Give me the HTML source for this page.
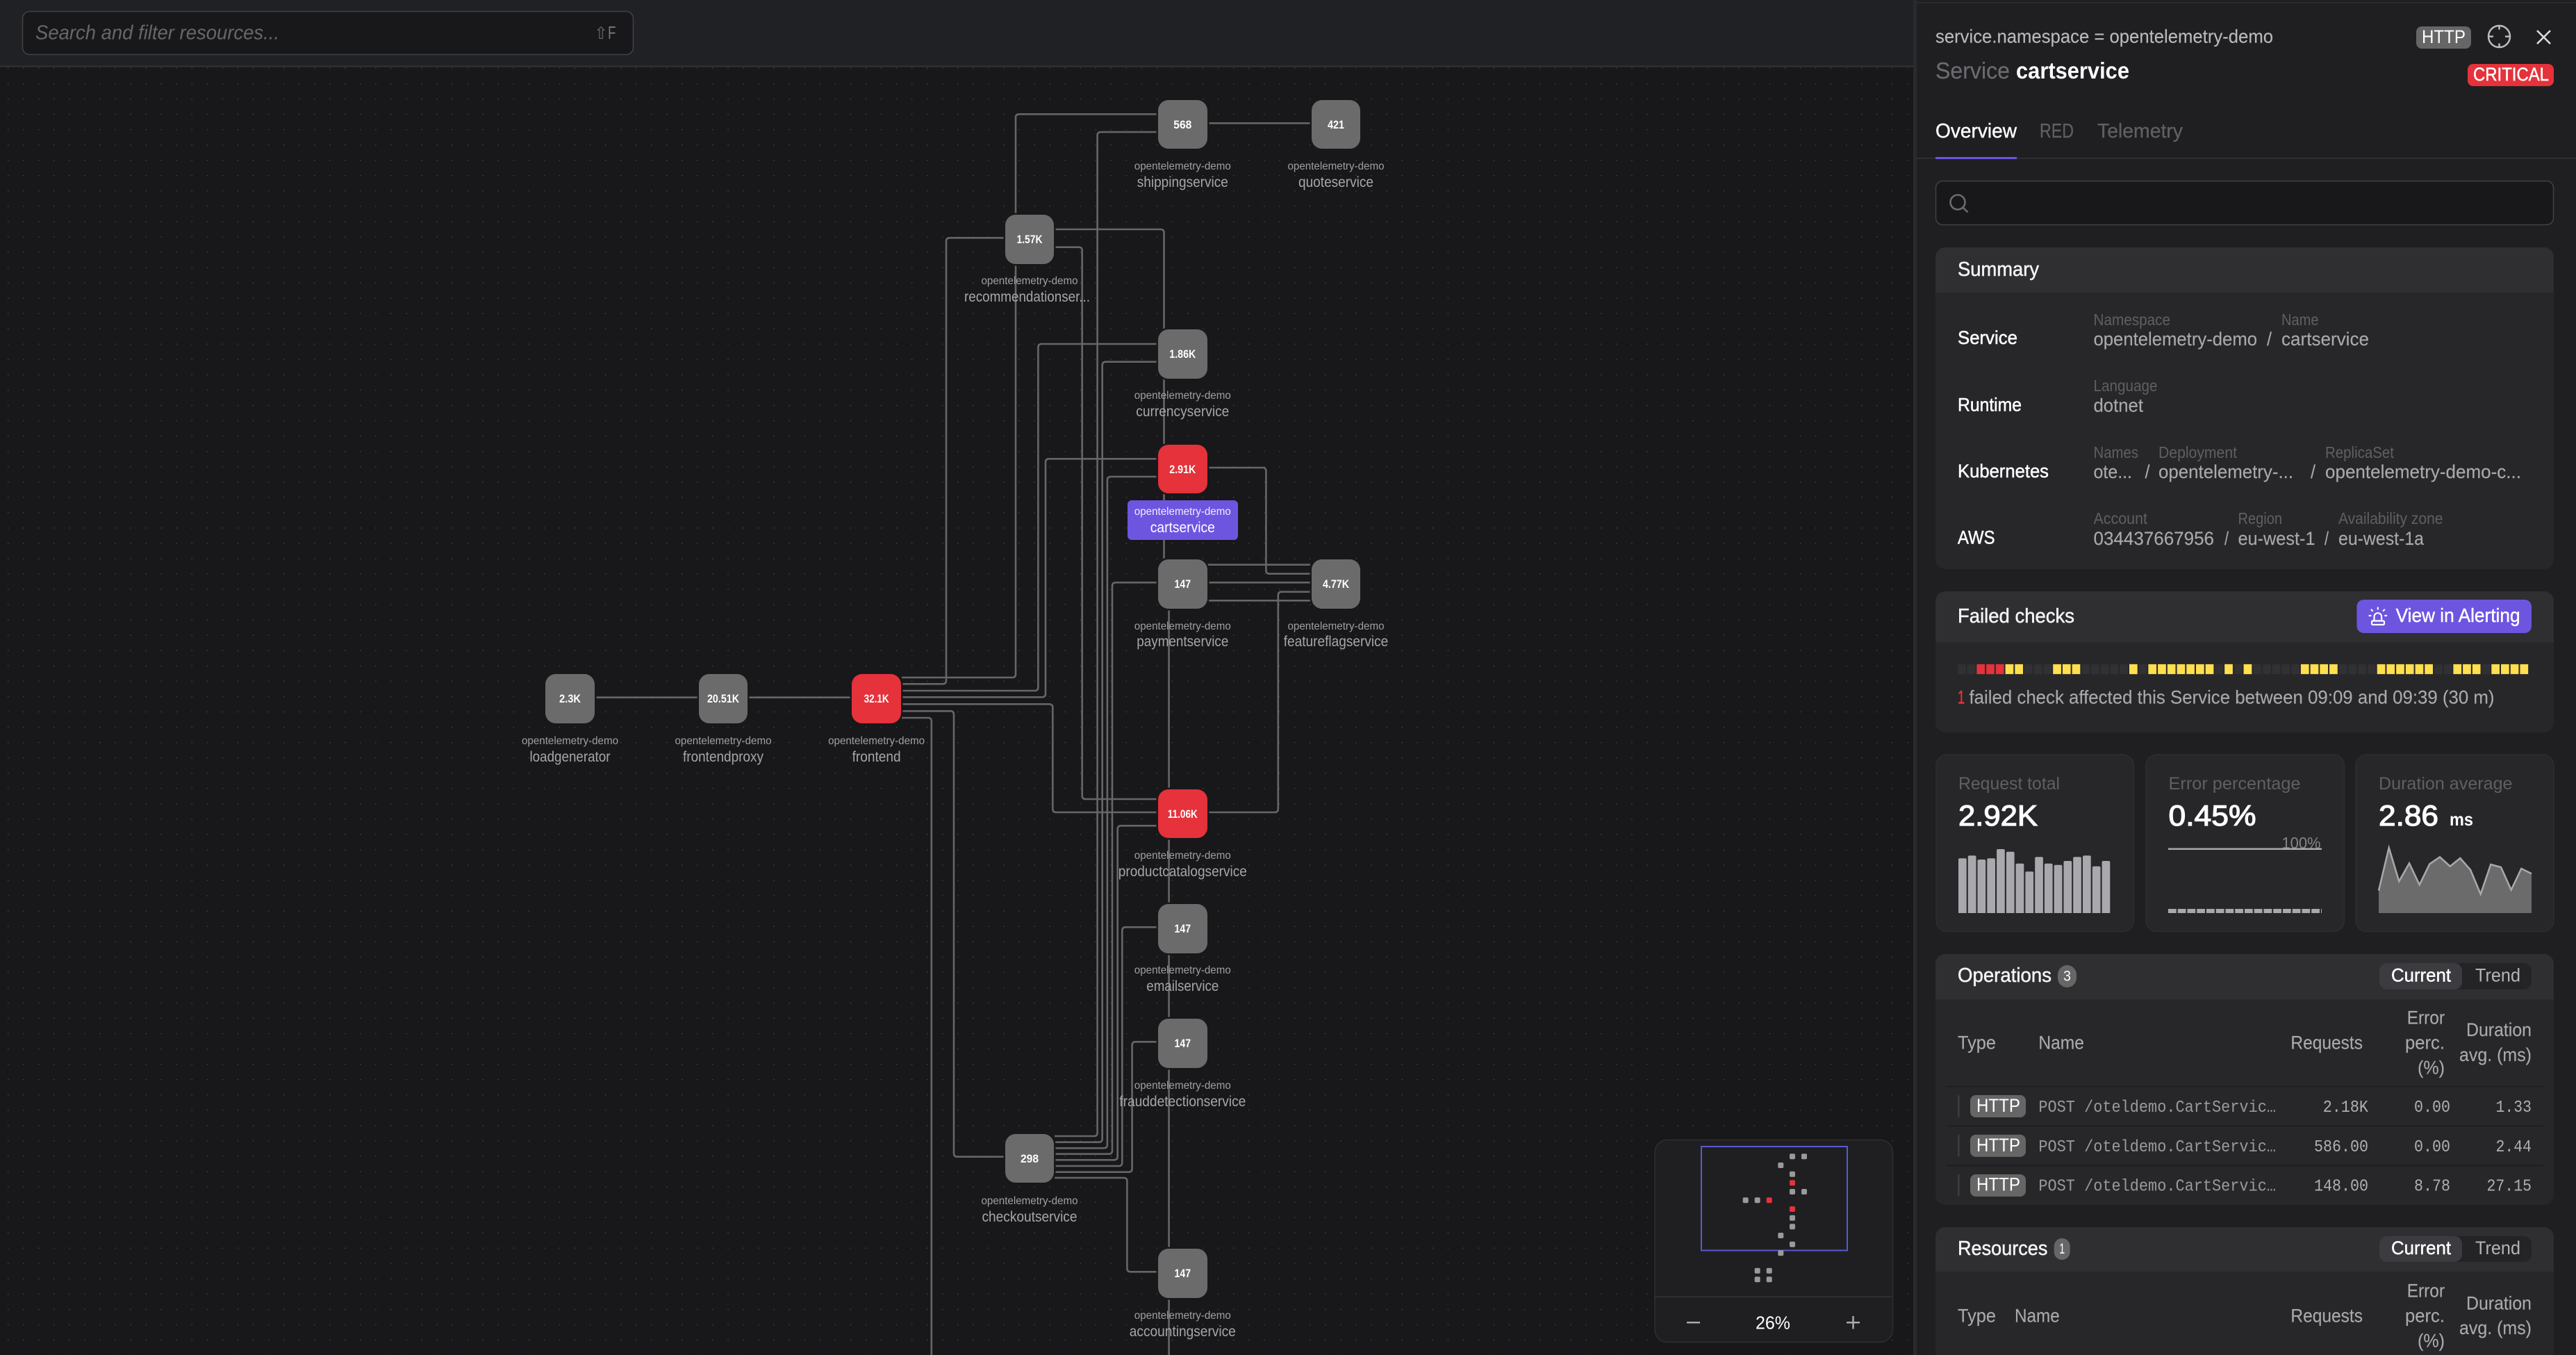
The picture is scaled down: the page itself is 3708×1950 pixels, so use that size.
<!DOCTYPE html>
<html><head><meta charset="utf-8"><title>Service map</title>
<style>
html,body{margin:0;padding:0;background:#18181b;width:3708px;height:1950px;overflow:hidden}
svg{display:block;position:absolute;left:0;top:0}
text{font-family:"Liberation Sans",sans-serif;white-space:pre}
.mono{font-family:"Liberation Mono",monospace;font-size:24px;fill:#9a9a9e}
.num{font-family:"Liberation Mono",monospace;font-size:24px;fill:#b0b0b4}
.n{fill:#fff;font-size:17px;font-weight:700}
.ns{fill:#a0a0a3;font-size:16px}
.nm{fill:#a6a6a9;font-size:21px}
.key{fill:#fff;font-size:27px;stroke:#fff;stroke-width:.5}
.lb{fill:#5f5f64;font-size:23px}
.val{fill:#a9a9ad;font-size:27px;stroke:#a9a9ad;stroke-width:.15}
.th{fill:#a9a9ad;font-size:27px;stroke:#a9a9ad;stroke-width:.15}
.hd{fill:#f4f4f5;font-size:29px;stroke:#f4f4f5;stroke-width:.5}
.big{fill:#fff;font-size:42px;font-weight:400;stroke:#fff;stroke-width:1.2}
.mlb{fill:#5f5f64;font-size:25px}
.e path,.e line{fill:none;stroke:#666;stroke-width:2.6}
.node{stroke:#18181b;stroke-width:5;paint-order:stroke}
</style></head><body>
<svg width="3708" height="1950" viewBox="0 0 3708 1950" xmlns="http://www.w3.org/2000/svg">
<defs>
<pattern id="dots" x="0" y="0" width="22.05" height="22.05" patternUnits="userSpaceOnUse" patternTransform="translate(11 97.7)"><circle cx="0.5" cy="0.5" r="1" fill="#47474b"/></pattern>
</defs>
<rect width="3708" height="1950" fill="#18181b"/>
<rect x="0" y="96" width="2760" height="1854" fill="url(#dots)"/>
<!-- top bar -->
<rect x="0" y="0" width="2754" height="95" fill="#202124"/>
<rect x="0" y="94.5" width="2754" height="2" fill="#333336"/>
<rect x="32.5" y="16.5" width="879" height="62" rx="10" fill="#18181b" stroke="#414145" stroke-width="1.6"/>
<text x="51" y="56.7" font-size="29" font-style="italic" fill="#67676b" textLength="351" lengthAdjust="spacingAndGlyphs">Search and filter resources...</text>
<text x="855" y="56" font-size="24" fill="#67676b" font-family="DejaVu Sans">⇧</text>
<text x="875" y="56" font-size="26" fill="#77777b" textLength="11.5" lengthAdjust="spacingAndGlyphs">F</text>

<!-- edges -->
<g class="e">
<line x1="858" y1="1003.7" x2="1004" y2="1003.7"/>
<line x1="1078" y1="1003.7" x2="1225" y2="1003.7"/>
<line x1="1739" y1="177.3" x2="1886" y2="177.3"/>
<path d="M1298 975H1457Q1462 975 1462 970V169Q1462 164.3 1467 164.3H1665"/>
<path d="M1518 1635H1575Q1579.6 1635 1579.6 1630V195Q1579.6 190 1584.6 190H1665"/>
<path d="M1298 984.3H1357Q1362 984.3 1362 979.3V347.3Q1362 342.3 1367 342.3H1445"/>
<path d="M1518 330H1670.5Q1675.5 330 1675.5 335V807.7Q1675.5 812.7 1680.5 812.7H1886"/>
<path d="M1886 864.3H1687.6Q1682.6 864.3 1682.6 869.3V1950"/>
<line x1="1739" y1="838.3" x2="1886" y2="838.3"/>
<path d="M1518 355.7H1552.7Q1557.7 355.7 1557.7 360.7V1145Q1557.7 1150 1562.7 1150H1665"/>
<path d="M1298 994H1489.4Q1494.4 994 1494.4 989V500Q1494.4 495 1499.4 495H1665"/>
<path d="M1518 1643.7H1581.7Q1586.7 1643.7 1586.7 1638.7V525.7Q1586.7 520.7 1591.7 520.7H1665"/>
<path d="M1298 1003.3H1500Q1505 1003.3 1505 998.3V665.3Q1505 660.3 1510 660.3H1665"/>
<path d="M1518 1652.3H1588.9Q1593.9 1652.3 1593.9 1647.3V691Q1593.9 686 1598.9 686H1665"/>
<path d="M1739 673H1817.4Q1822.4 673 1822.4 678V820.7Q1822.4 825.7 1827.4 825.7H1886"/>
<path d="M1518 1660.7H1596Q1601 1660.7 1601 1655.7V843.3Q1601 838.3 1606 838.3H1665"/>
<path d="M1886 851.7H1844.8Q1839.8 851.7 1839.8 856.7V1164Q1839.8 1169 1834.8 1169H1739"/>
<path d="M1298 1013.3H1510.3Q1515.3 1013.3 1515.3 1018.3V1164Q1515.3 1169 1520.3 1169H1665"/>
<path d="M1298 1023.3H1368Q1373 1023.3 1373 1028.3V1659.7Q1373 1664.7 1378 1664.7H1445"/>
<path d="M1298 1033H1335.8Q1340.8 1033 1340.8 1038V1950"/>
<path d="M1518 1669.3H1603.7Q1608.7 1669.3 1608.7 1664.3V1193.3Q1608.7 1188.3 1613.7 1188.3H1665"/>
<path d="M1518 1678H1610.3Q1615.3 1678 1615.3 1673V1339.3Q1615.3 1334.3 1620.3 1334.3H1665"/>
<path d="M1518 1686.7H1624.6Q1629.6 1686.7 1629.6 1681.7V1504.3Q1629.6 1499.3 1634.6 1499.3H1665"/>
<path d="M1518 1695H1617.4Q1622.4 1695 1622.4 1700V1825.3Q1622.4 1830.3 1627.4 1830.3H1665"/>
</g>

<!-- nodes -->
<g>
<rect class="node" x="1667" y="144" width="71" height="70" rx="15" fill="#6b6b6b"/>
<text class="n" x="1702.3" y="185" text-anchor="middle" textLength="26" lengthAdjust="spacingAndGlyphs">568</text>
<text class="ns" x="1702.3" y="244" text-anchor="middle" textLength="139" lengthAdjust="spacingAndGlyphs">opentelemetry-demo</text>
<text class="nm" x="1702.3" y="269" text-anchor="middle" textLength="131" lengthAdjust="spacingAndGlyphs">shippingservice</text>

<rect class="node" x="1888" y="144" width="70" height="70" rx="15" fill="#6b6b6b"/>
<text class="n" x="1923" y="185" text-anchor="middle" textLength="24" lengthAdjust="spacingAndGlyphs">421</text>
<text class="ns" x="1923" y="244" text-anchor="middle" textLength="139" lengthAdjust="spacingAndGlyphs">opentelemetry-demo</text>
<text class="nm" x="1923" y="269" text-anchor="middle" textLength="108" lengthAdjust="spacingAndGlyphs">quoteservice</text>

<rect class="node" x="1447" y="309" width="70" height="71" rx="15" fill="#6b6b6b"/>
<text class="n" x="1482" y="350" text-anchor="middle" textLength="37" lengthAdjust="spacingAndGlyphs">1.57K</text>
<text class="ns" x="1482" y="409" text-anchor="middle" textLength="139" lengthAdjust="spacingAndGlyphs">opentelemetry-demo</text>
<text class="nm" x="1388" y="434" textLength="181" lengthAdjust="spacingAndGlyphs">recommendationser...</text>

<rect class="node" x="1667" y="474" width="71" height="71" rx="15" fill="#6b6b6b"/>
<text class="n" x="1702.3" y="515" text-anchor="middle" textLength="38" lengthAdjust="spacingAndGlyphs">1.86K</text>
<text class="ns" x="1702.3" y="574" text-anchor="middle" textLength="139" lengthAdjust="spacingAndGlyphs">opentelemetry-demo</text>
<text class="nm" x="1702.3" y="599" text-anchor="middle" textLength="134" lengthAdjust="spacingAndGlyphs">currencyservice</text>

<rect class="node" x="1667" y="640" width="71" height="70" rx="15" fill="#e5323b"/>
<text class="n" x="1702.3" y="681" text-anchor="middle" textLength="38" lengthAdjust="spacingAndGlyphs">2.91K</text>
<rect x="1623" y="720" width="159" height="57" rx="6" fill="#6e55e0"/>
<text class="ns" style="fill:#f0eefc" x="1702.3" y="741" text-anchor="middle" textLength="139" lengthAdjust="spacingAndGlyphs">opentelemetry-demo</text>
<text class="nm" style="fill:#fff" x="1702.3" y="766" text-anchor="middle" textLength="93" lengthAdjust="spacingAndGlyphs">cartservice</text>

<rect class="node" x="1667" y="805" width="71" height="71" rx="15" fill="#6b6b6b"/>
<text class="n" x="1702.3" y="846" text-anchor="middle" textLength="23.5" lengthAdjust="spacingAndGlyphs">147</text>
<text class="ns" x="1702.3" y="906" text-anchor="middle" textLength="139" lengthAdjust="spacingAndGlyphs">opentelemetry-demo</text>
<text class="nm" x="1702.3" y="930" text-anchor="middle" textLength="132" lengthAdjust="spacingAndGlyphs">paymentservice</text>

<rect class="node" x="1888" y="805" width="70" height="71" rx="15" fill="#6b6b6b"/>
<text class="n" x="1923" y="846" text-anchor="middle" textLength="38" lengthAdjust="spacingAndGlyphs">4.77K</text>
<text class="ns" x="1923" y="906" text-anchor="middle" textLength="139" lengthAdjust="spacingAndGlyphs">opentelemetry-demo</text>
<text class="nm" x="1923" y="930" text-anchor="middle" textLength="150.5" lengthAdjust="spacingAndGlyphs">featureflagservice</text>

<rect class="node" x="785" y="970" width="71" height="71" rx="15" fill="#6b6b6b"/>
<text class="n" x="820.5" y="1011" text-anchor="middle" textLength="31" lengthAdjust="spacingAndGlyphs">2.3K</text>
<text class="ns" x="820.5" y="1071" text-anchor="middle" textLength="139" lengthAdjust="spacingAndGlyphs">opentelemetry-demo</text>
<text class="nm" x="820.5" y="1096" text-anchor="middle" textLength="116" lengthAdjust="spacingAndGlyphs">loadgenerator</text>

<rect class="node" x="1006" y="970" width="70" height="71" rx="15" fill="#6b6b6b"/>
<text class="n" x="1041" y="1011" text-anchor="middle" textLength="46" lengthAdjust="spacingAndGlyphs">20.51K</text>
<text class="ns" x="1041" y="1071" text-anchor="middle" textLength="139" lengthAdjust="spacingAndGlyphs">opentelemetry-demo</text>
<text class="nm" x="1041" y="1096" text-anchor="middle" textLength="116" lengthAdjust="spacingAndGlyphs">frontendproxy</text>

<rect class="node" x="1226" y="970" width="71" height="71" rx="15" fill="#e5323b"/>
<text class="n" x="1261.6" y="1011" text-anchor="middle" textLength="36" lengthAdjust="spacingAndGlyphs">32.1K</text>
<text class="ns" x="1261.6" y="1071" text-anchor="middle" textLength="139" lengthAdjust="spacingAndGlyphs">opentelemetry-demo</text>
<text class="nm" x="1261.6" y="1096" text-anchor="middle" textLength="70" lengthAdjust="spacingAndGlyphs">frontend</text>

<rect class="node" x="1667" y="1136" width="71" height="70" rx="15" fill="#e5323b"/>
<text class="n" x="1702.3" y="1177" text-anchor="middle" textLength="43" lengthAdjust="spacingAndGlyphs">11.06K</text>
<text class="ns" x="1702.3" y="1236" text-anchor="middle" textLength="139" lengthAdjust="spacingAndGlyphs">opentelemetry-demo</text>
<text class="nm" x="1702.3" y="1261" text-anchor="middle" textLength="185" lengthAdjust="spacingAndGlyphs">productcatalogservice</text>

<rect class="node" x="1667" y="1301" width="71" height="71" rx="15" fill="#6b6b6b"/>
<text class="n" x="1702.3" y="1342" text-anchor="middle" textLength="23.5" lengthAdjust="spacingAndGlyphs">147</text>
<text class="ns" x="1702.3" y="1401" text-anchor="middle" textLength="139" lengthAdjust="spacingAndGlyphs">opentelemetry-demo</text>
<text class="nm" x="1702.3" y="1426" text-anchor="middle" textLength="104" lengthAdjust="spacingAndGlyphs">emailservice</text>

<rect class="node" x="1667" y="1466" width="71" height="71" rx="15" fill="#6b6b6b"/>
<text class="n" x="1702.3" y="1507" text-anchor="middle" textLength="23.5" lengthAdjust="spacingAndGlyphs">147</text>
<text class="ns" x="1702.3" y="1567" text-anchor="middle" textLength="139" lengthAdjust="spacingAndGlyphs">opentelemetry-demo</text>
<text class="nm" x="1702.3" y="1592" text-anchor="middle" textLength="182" lengthAdjust="spacingAndGlyphs">frauddetectionservice</text>

<rect class="node" x="1447" y="1632" width="70" height="70" rx="15" fill="#6b6b6b"/>
<text class="n" x="1482" y="1673" text-anchor="middle" textLength="26" lengthAdjust="spacingAndGlyphs">298</text>
<text class="ns" x="1482" y="1733" text-anchor="middle" textLength="139" lengthAdjust="spacingAndGlyphs">opentelemetry-demo</text>
<text class="nm" x="1482" y="1758" text-anchor="middle" textLength="137" lengthAdjust="spacingAndGlyphs">checkoutservice</text>

<rect class="node" x="1667" y="1797" width="71" height="71" rx="15" fill="#6b6b6b"/>
<text class="n" x="1702.3" y="1838" text-anchor="middle" textLength="23.5" lengthAdjust="spacingAndGlyphs">147</text>
<text class="ns" x="1702.3" y="1898" text-anchor="middle" textLength="139" lengthAdjust="spacingAndGlyphs">opentelemetry-demo</text>
<text class="nm" x="1702.3" y="1923" text-anchor="middle" textLength="153" lengthAdjust="spacingAndGlyphs">accountingservice</text>
</g>

<!-- minimap -->
<rect x="2382" y="1640.5" width="342.5" height="291" rx="18" fill="#1f1f22" stroke="#2f2f32" stroke-width="1.5"/>
<rect x="2449" y="1650" width="210" height="149.5" fill="none" stroke="#5a5ad0" stroke-width="2"/>
<g fill="#9a9a9a">
<rect x="2576" y="1660.3" width="8" height="8" rx="2"/><rect x="2593" y="1660.3" width="8" height="8" rx="2"/>
<rect x="2559.3" y="1673" width="8" height="8" rx="2"/>
<rect x="2576" y="1685.7" width="8" height="8" rx="2"/>
<rect x="2576" y="1711" width="8" height="8" rx="2"/><rect x="2593" y="1711" width="8" height="8" rx="2"/>
<rect x="2508.7" y="1723.3" width="8" height="8" rx="2"/><rect x="2525.7" y="1723.3" width="8" height="8" rx="2"/>
<rect x="2576" y="1748.7" width="8" height="8" rx="2"/>
<rect x="2576" y="1761.3" width="8" height="8" rx="2"/>
<rect x="2559.3" y="1774" width="8" height="8" rx="2"/>
<rect x="2576" y="1786.7" width="8" height="8" rx="2"/>
<rect x="2559.3" y="1799.3" width="8" height="8" rx="2"/>
<rect x="2525.7" y="1824.7" width="8" height="8" rx="2"/><rect x="2542.7" y="1824.7" width="8" height="8" rx="2"/>
<rect x="2525.7" y="1837.3" width="8" height="8" rx="2"/><rect x="2542.7" y="1837.3" width="8" height="8" rx="2"/>
</g>
<g fill="#e5323b">
<rect x="2576" y="1698.3" width="8" height="8" rx="2"/>
<rect x="2542.7" y="1723.3" width="8" height="8" rx="2"/>
<rect x="2576" y="1736" width="8" height="8" rx="2"/>
</g>
<rect x="2382" y="1865.5" width="341" height="1.5" fill="#333336"/>
<path d="M2428 1903.3H2447M2658 1903.3H2677M2667.5 1894V1912.5" stroke="#aaa" stroke-width="2.5" fill="none"/>
<text x="2527" y="1912.7" font-size="26" fill="#fff" textLength="50" lengthAdjust="spacingAndGlyphs">26%</text>

<!-- panel -->
<rect x="2754" y="0" width="954" height="1950" fill="#1f1f22"/>
<rect x="2754" y="0" width="5" height="1950" fill="#2a2a2d"/>
<rect x="2754" y="3" width="954" height="1.5" fill="#2c2c2f"/>

<text x="2786" y="61.5" font-size="27" fill="#b9b9bd" stroke="#b9b9bd" stroke-width=".15" textLength="486" lengthAdjust="spacingAndGlyphs">service.namespace = opentelemetry-demo</text>
<rect x="3478" y="38" width="79" height="32" rx="8" fill="#666"/>
<text x="3486" y="62" font-size="27" fill="#fff" textLength="63" lengthAdjust="spacingAndGlyphs">HTTP</text>
<g fill="none" stroke="#bcbcbc" stroke-width="2.5">
<circle cx="3597.5" cy="52.5" r="15.5"/>
<path d="M3597.5 36V42.5M3597.5 62.5V69M3581 52.5H3589M3606 52.5H3614"/>
</g>
<path d="M3652 44L3671 63M3671 44L3652 63" stroke="#dcdcdc" stroke-width="2.6" fill="none"/>

<text x="2786" y="113" font-size="33" fill="#6b6b70" stroke="#6b6b70" stroke-width=".2" textLength="107" lengthAdjust="spacingAndGlyphs">Service</text>
<text x="2902" y="113" font-size="33" font-weight="700" fill="#fff" textLength="163" lengthAdjust="spacingAndGlyphs">cartservice</text>
<rect x="3552" y="92" width="124" height="32" rx="8" fill="#e5323b"/>
<text x="3560" y="116" font-size="27" fill="#fff" stroke="#fff" stroke-width=".5" textLength="109" lengthAdjust="spacingAndGlyphs">CRITICAL</text>

<text x="2786" y="198" font-size="29" fill="#fff" stroke="#fff" stroke-width=".4" textLength="117" lengthAdjust="spacingAndGlyphs">Overview</text>
<text x="2936" y="198" font-size="29" fill="#5f5f64" stroke="#5f5f64" stroke-width=".3" textLength="49" lengthAdjust="spacingAndGlyphs">RED</text>
<text x="3019" y="198" font-size="29" fill="#5f5f64" stroke="#5f5f64" stroke-width=".3" textLength="123" lengthAdjust="spacingAndGlyphs">Telemetry</text>
<rect x="2759" y="227" width="949" height="1.5" fill="#333336"/>
<rect x="2786" y="226" width="117" height="3" fill="#6e55e0"/>

<rect x="2786.5" y="260.5" width="889" height="63" rx="10" fill="#18181b" stroke="#414145" stroke-width="1.5"/>
<circle cx="2818" cy="291" r="10.5" fill="none" stroke="#6b6b70" stroke-width="2.6"/>
<path d="M2826 299L2832.5 305.5" stroke="#6b6b70" stroke-width="2.6"/>

<!-- Summary -->
<rect x="2786" y="356" width="890" height="463" rx="14" fill="#27272a"/>
<path d="M2786 421V370a14 14 0 0 1 14-14H3662a14 14 0 0 1 14 14V421Z" fill="#2f2f32"/>
<text class="hd" x="2818" y="397" textLength="117" lengthAdjust="spacingAndGlyphs">Summary</text>
<text class="key" x="2818" y="495" textLength="86" lengthAdjust="spacingAndGlyphs">Service</text>
<text class="lb" x="3013.5" y="468" textLength="110.5" lengthAdjust="spacingAndGlyphs">Namespace</text>
<text class="lb" x="3284" y="468" textLength="53.5" lengthAdjust="spacingAndGlyphs">Name</text>
<text class="val" x="3013.5" y="497" textLength="235.5" lengthAdjust="spacingAndGlyphs">opentelemetry-demo</text>
<text class="val" x="3263" y="497" textLength="7" lengthAdjust="spacingAndGlyphs">/</text>
<text class="val" x="3284" y="497" textLength="126" lengthAdjust="spacingAndGlyphs">cartservice</text>

<text class="key" x="2818" y="591.5" textLength="92" lengthAdjust="spacingAndGlyphs">Runtime</text>
<text class="lb" x="3013.5" y="563" textLength="92" lengthAdjust="spacingAndGlyphs">Language</text>
<text class="val" x="3013.5" y="592.7" textLength="71.5" lengthAdjust="spacingAndGlyphs">dotnet</text>

<text class="key" x="2818" y="687" textLength="131" lengthAdjust="spacingAndGlyphs">Kubernetes</text>
<text class="lb" x="3013.5" y="659" textLength="64.5" lengthAdjust="spacingAndGlyphs">Names</text>
<text class="lb" x="3107" y="659" textLength="113" lengthAdjust="spacingAndGlyphs">Deployment</text>
<text class="lb" x="3347" y="659" textLength="99" lengthAdjust="spacingAndGlyphs">ReplicaSet</text>
<text class="val" x="3013.5" y="688" textLength="55.5" lengthAdjust="spacingAndGlyphs">ote...</text>
<text class="val" x="3087.5" y="688" textLength="7" lengthAdjust="spacingAndGlyphs">/</text>
<text class="val" x="3107" y="688" textLength="194" lengthAdjust="spacingAndGlyphs">opentelemetry-...</text>
<text class="val" x="3326" y="688" textLength="7" lengthAdjust="spacingAndGlyphs">/</text>
<text class="val" x="3347" y="688" textLength="282" lengthAdjust="spacingAndGlyphs">opentelemetry-demo-c...</text>

<text class="key" x="2818" y="782.5" textLength="53.5" lengthAdjust="spacingAndGlyphs">AWS</text>
<text class="lb" x="3013.5" y="754" textLength="77.5" lengthAdjust="spacingAndGlyphs">Account</text>
<text class="lb" x="3221.5" y="754" textLength="63.5" lengthAdjust="spacingAndGlyphs">Region</text>
<text class="lb" x="3366" y="754" textLength="150.5" lengthAdjust="spacingAndGlyphs">Availability zone</text>
<text class="val" x="3013.5" y="784" textLength="173.5" lengthAdjust="spacingAndGlyphs">034437667956</text>
<text class="val" x="3202" y="784" textLength="6" lengthAdjust="spacingAndGlyphs">/</text>
<text class="val" x="3221.5" y="784" textLength="111" lengthAdjust="spacingAndGlyphs">eu-west-1</text>
<text class="val" x="3346" y="784" textLength="6" lengthAdjust="spacingAndGlyphs">/</text>
<text class="val" x="3366" y="784" textLength="123" lengthAdjust="spacingAndGlyphs">eu-west-1a</text>

<!-- Failed checks -->
<rect x="2786" y="851" width="890" height="203" rx="14" fill="#27272a"/>
<path d="M2786 924V865a14 14 0 0 1 14-14H3662a14 14 0 0 1 14 14V924Z" fill="#2f2f32"/>
<text class="hd" x="2818" y="896" textLength="168" lengthAdjust="spacingAndGlyphs">Failed checks</text>
<rect x="3392.5" y="863" width="251.5" height="48" rx="10" fill="#6e55e0"/>
<g fill="none" stroke="#fff" stroke-width="2.2" stroke-linecap="round">
<path d="M3417.5 893V887.5a5.3 5.3 0 0 1 10.6 0V893"/>
<rect x="3414" y="893.5" width="18" height="5.5" rx="1.5"/>
<path d="M3422.8 874.5V876.5M3413.5 877.5L3415 879M3432.2 877.5L3430.6 879M3410.5 886H3412.5M3433.2 886H3435.2"/>
</g>
<text x="3448.6" y="895" font-size="28" fill="#fff" stroke="#fff" stroke-width=".4" textLength="179" lengthAdjust="spacingAndGlyphs">View in Alerting</text>
<g fill="none" stroke-width="14.3" stroke-dasharray="11.7 2.02">
<line x1="2818" y1="963" x2="3641" y2="963" stroke="#313134"/>
<line x1="2845.4" y1="963" x2="2884.6" y2="963" stroke="#e5323b"/>
<line x1="2886.6" y1="963" x2="2912" y2="963" stroke="#ffdf4d"/>
<line x1="2955.2" y1="963" x2="2994.4" y2="963" stroke="#ffdf4d"/>
<line x1="3065" y1="963" x2="3076.7" y2="963" stroke="#ffdf4d"/>
<line x1="3092.4" y1="963" x2="3186.4" y2="963" stroke="#ffdf4d"/>
<line x1="3202.2" y1="963" x2="3213.9" y2="963" stroke="#ffdf4d"/>
<line x1="3229.6" y1="963" x2="3241.3" y2="963" stroke="#ffdf4d"/>
<line x1="3311.9" y1="963" x2="3364.8" y2="963" stroke="#ffdf4d"/>
<line x1="3421.7" y1="963" x2="3502" y2="963" stroke="#ffdf4d"/>
<line x1="3531.4" y1="963" x2="3570.6" y2="963" stroke="#ffdf4d"/>
<line x1="3586.3" y1="963" x2="3641" y2="963" stroke="#ffdf4d"/>
</g>
<text x="2818" y="1012.7" font-size="27" fill="#f03038" stroke="#f03038" stroke-width=".5" textLength="10" lengthAdjust="spacingAndGlyphs">1</text>
<text class="val" x="2834.5" y="1012.7" textLength="756" lengthAdjust="spacingAndGlyphs">failed check affected this Service between 09:09 and 09:39 (30 m)</text>

<!-- metric cards -->
<g fill="#27272a" stroke="#2e2e31" stroke-width="1.5">
<rect x="2787" y="1086" width="284.5" height="254.5" rx="16"/>
<rect x="3089" y="1086" width="285.5" height="254.5" rx="16"/>
<rect x="3391" y="1086" width="285" height="254.5" rx="16"/>
</g>
<text class="mlb" x="2819" y="1136" textLength="146" lengthAdjust="spacingAndGlyphs">Request total</text>
<text class="mlb" x="3121.5" y="1136" textLength="190" lengthAdjust="spacingAndGlyphs">Error percentage</text>
<text class="mlb" x="3424" y="1136" textLength="192.5" lengthAdjust="spacingAndGlyphs">Duration average</text>
<text class="big" x="2819" y="1188" textLength="114" lengthAdjust="spacingAndGlyphs">2.92K</text>
<text class="big" x="3121.5" y="1188" textLength="126" lengthAdjust="spacingAndGlyphs">0.45%</text>
<text class="big" x="3424" y="1188" textLength="86" lengthAdjust="spacingAndGlyphs">2.86</text>
<text x="3526" y="1188" font-size="26" fill="#fff" font-weight="700" textLength="34" lengthAdjust="spacingAndGlyphs">ms</text>
<g fill="#a9a9ad">
<rect x="2819" y="1235.3" width="11.7" height="82" rx="2"/>
<rect x="2832.8" y="1231.3" width="11.7" height="86" rx="2"/>
<rect x="2846.5" y="1237" width="11.7" height="80" rx="2"/>
<rect x="2860.3" y="1235.3" width="11.7" height="82" rx="2"/>
<rect x="2874.1" y="1222" width="11.7" height="95" rx="2"/>
<rect x="2887.9" y="1225.7" width="11.7" height="92" rx="2"/>
<rect x="2901.6" y="1242.7" width="11.7" height="75" rx="2"/>
<rect x="2915.4" y="1254.3" width="11.7" height="63" rx="2"/>
<rect x="2929.2" y="1233.3" width="11.7" height="84" rx="2"/>
<rect x="2942.9" y="1242.7" width="11.7" height="75" rx="2"/>
<rect x="2956.7" y="1244.7" width="11.7" height="73" rx="2"/>
<rect x="2970.5" y="1239" width="11.7" height="78" rx="2"/>
<rect x="2984.2" y="1233.3" width="11.7" height="84" rx="2"/>
<rect x="2998" y="1231.3" width="11.7" height="86" rx="2"/>
<rect x="3011.8" y="1246.7" width="11.7" height="71" rx="2"/>
<rect x="3025.6" y="1239" width="11.7" height="78" rx="2"/>
</g>
<rect x="2815" y="1314" width="230" height="5" fill="#27272a"/>
<text x="3284.5" y="1221" font-size="23" fill="#85858a" textLength="56" lengthAdjust="spacingAndGlyphs">100%</text>
<rect x="3121" y="1220.5" width="221" height="2.5" fill="#a9a9ad"/>
<line x1="3121" y1="1311" x2="3342" y2="1311" stroke="#a9a9ad" stroke-width="6" stroke-dasharray="11.7 2.05"/>
<path d="M3424 1281.7L3438.7 1220L3453.3 1268.3L3468 1242.3L3482.7 1273.3L3497.3 1243.3L3512 1233.3L3526.7 1246.7L3541.3 1235L3556 1251.7L3570.7 1286.7L3585.3 1244L3600 1248L3614.7 1280.7L3629.3 1250L3644 1257.3V1314H3424Z" fill="#6b6b6b"/>
<path d="M3424 1281.7L3438.7 1220L3453.3 1268.3L3468 1242.3L3482.7 1273.3L3497.3 1243.3L3512 1233.3L3526.7 1246.7L3541.3 1235L3556 1251.7L3570.7 1286.7L3585.3 1244L3600 1248L3614.7 1280.7L3629.3 1250L3644 1257.3" fill="none" stroke="#a9a9ad" stroke-width="2.5"/>

<!-- Operations -->
<rect x="2786" y="1373" width="890" height="361" rx="14" fill="#27272a"/>
<path d="M2786 1438V1387a14 14 0 0 1 14-14H3662a14 14 0 0 1 14 14V1438Z" fill="#2f2f32"/>
<text class="hd" x="2818" y="1413" textLength="135" lengthAdjust="spacingAndGlyphs">Operations</text>
<rect x="2962" y="1389" width="27" height="32" rx="13.5" fill="#666"/>
<text x="2975.5" y="1411.5" font-size="21" fill="#fff" text-anchor="middle" textLength="11" lengthAdjust="spacingAndGlyphs">3</text>
<rect x="3425" y="1386" width="219" height="38" rx="11" fill="#242427"/>
<rect x="3425" y="1386" width="119" height="38" rx="11" fill="#3c3c40"/>
<text x="3442" y="1412.7" font-size="27" fill="#fff" stroke="#fff" stroke-width=".4" textLength="86" lengthAdjust="spacingAndGlyphs">Current</text>
<text x="3563" y="1412.7" font-size="27" fill="#b4b4b8" textLength="65" lengthAdjust="spacingAndGlyphs">Trend</text>

<text class="th" x="2818" y="1509.4" textLength="55" lengthAdjust="spacingAndGlyphs">Type</text>
<text class="th" x="2934.4" y="1509.4" textLength="65.5" lengthAdjust="spacingAndGlyphs">Name</text>
<text class="th" x="3297.4" y="1509.4" textLength="103.6" lengthAdjust="spacingAndGlyphs">Requests</text>
<text class="th" x="3464.7" y="1473.7" textLength="54.3" lengthAdjust="spacingAndGlyphs">Error</text>
<text class="th" x="3462" y="1509.4" textLength="57" lengthAdjust="spacingAndGlyphs">perc.</text>
<text class="th" x="3480" y="1545.6" textLength="39" lengthAdjust="spacingAndGlyphs">(%)</text>
<text class="th" x="3550" y="1491.2" textLength="94" lengthAdjust="spacingAndGlyphs">Duration</text>
<text class="th" x="3540" y="1527" textLength="104" lengthAdjust="spacingAndGlyphs">avg. (ms)</text>
<g fill="#1c1c1f">
<rect x="2802" y="1563" width="859" height="1.5"/>
<rect x="2802" y="1619.7" width="859" height="1.5"/>
<rect x="2802" y="1676.7" width="859" height="1.5"/>
</g>
<g fill="#3c3c3f">
<rect x="2818" y="1576.4" width="2.5" height="31.6"/>
<rect x="2818" y="1633" width="2.5" height="31.6"/>
<rect x="2818" y="1690" width="2.5" height="31.6"/>
</g>
<g fill="#666">
<rect x="2836" y="1576" width="80" height="32" rx="8"/>
<rect x="2836" y="1632.9" width="80" height="32" rx="8"/>
<rect x="2836" y="1690" width="80" height="32" rx="8"/>
</g>
<g font-size="27" fill="#fff">
<text x="2845" y="1600" textLength="63" lengthAdjust="spacingAndGlyphs">HTTP</text>
<text x="2845" y="1656.8" textLength="63" lengthAdjust="spacingAndGlyphs">HTTP</text>
<text x="2845" y="1713.6" textLength="63" lengthAdjust="spacingAndGlyphs">HTTP</text>
</g>
<text class="mono" x="2934.4" y="1600" textLength="341.6" lengthAdjust="spacingAndGlyphs">POST /oteldemo.CartServic…</text>
<text class="mono" x="2934.4" y="1656.8" textLength="341.6" lengthAdjust="spacingAndGlyphs">POST /oteldemo.CartServic…</text>
<text class="mono" x="2934.4" y="1713.6" textLength="341.6" lengthAdjust="spacingAndGlyphs">POST /oteldemo.CartServic…</text>
<text class="num" x="3343.7" y="1600" textLength="65.3" lengthAdjust="spacingAndGlyphs">2.18K</text>
<text class="num" x="3331" y="1656.8" textLength="78" lengthAdjust="spacingAndGlyphs">586.00</text>
<text class="num" x="3331" y="1713.6" textLength="78" lengthAdjust="spacingAndGlyphs">148.00</text>
<text class="num" x="3475" y="1600" textLength="52" lengthAdjust="spacingAndGlyphs">0.00</text>
<text class="num" x="3475" y="1656.8" textLength="52" lengthAdjust="spacingAndGlyphs">0.00</text>
<text class="num" x="3475" y="1713.6" textLength="52" lengthAdjust="spacingAndGlyphs">8.78</text>
<text class="num" x="3592.5" y="1600" textLength="51.5" lengthAdjust="spacingAndGlyphs">1.33</text>
<text class="num" x="3592.5" y="1656.8" textLength="51.5" lengthAdjust="spacingAndGlyphs">2.44</text>
<text class="num" x="3579.5" y="1713.6" textLength="64.5" lengthAdjust="spacingAndGlyphs">27.15</text>

<!-- Resources -->
<rect x="2786" y="1766" width="890" height="260" rx="14" fill="#27272a"/>
<path d="M2786 1830V1780a14 14 0 0 1 14-14H3662a14 14 0 0 1 14 14V1830Z" fill="#2f2f32"/>
<text class="hd" x="2818" y="1806.2" textLength="129.4" lengthAdjust="spacingAndGlyphs">Resources</text>
<rect x="2956.7" y="1782" width="23" height="31" rx="11.5" fill="#666"/>
<text x="2968.2" y="1804" font-size="21" fill="#fff" text-anchor="middle" textLength="8" lengthAdjust="spacingAndGlyphs">1</text>
<rect x="3425" y="1779" width="219" height="37" rx="11" fill="#242427"/>
<rect x="3425" y="1779" width="119" height="37" rx="11" fill="#3c3c40"/>
<text x="3442" y="1805" font-size="27" fill="#fff" stroke="#fff" stroke-width=".4" textLength="86" lengthAdjust="spacingAndGlyphs">Current</text>
<text x="3563" y="1805" font-size="27" fill="#b4b4b8" textLength="65" lengthAdjust="spacingAndGlyphs">Trend</text>
<text class="th" x="2818" y="1902.3" textLength="55" lengthAdjust="spacingAndGlyphs">Type</text>
<text class="th" x="2900" y="1902.3" textLength="64.7" lengthAdjust="spacingAndGlyphs">Name</text>
<text class="th" x="3297.4" y="1902.3" textLength="103.6" lengthAdjust="spacingAndGlyphs">Requests</text>
<text class="th" x="3464.7" y="1866.5" textLength="54.3" lengthAdjust="spacingAndGlyphs">Error</text>
<text class="th" x="3462" y="1902.3" textLength="57" lengthAdjust="spacingAndGlyphs">perc.</text>
<text class="th" x="3480" y="1938.4" textLength="39" lengthAdjust="spacingAndGlyphs">(%)</text>
<text class="th" x="3550" y="1884.7" textLength="94" lengthAdjust="spacingAndGlyphs">Duration</text>
<text class="th" x="3540" y="1919.8" textLength="104" lengthAdjust="spacingAndGlyphs">avg. (ms)</text>
</svg>
</body></html>
